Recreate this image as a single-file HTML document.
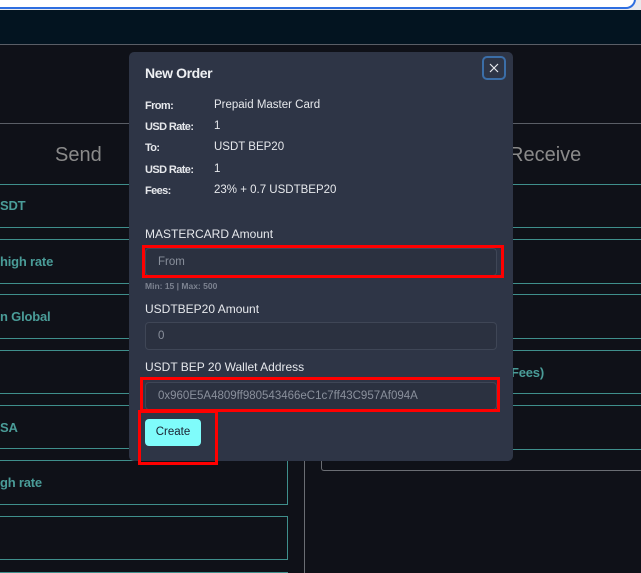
<!DOCTYPE html>
<html><head><meta charset="utf-8"><style>
*{box-sizing:border-box;margin:0;padding:0}
html,body{width:641px;height:573px;overflow:hidden}
body{background:#0f1118;font-family:"Liberation Sans",sans-serif;position:relative}
.a{position:absolute}
.row{position:absolute;border:1px solid #3f8f8c;border-left:none}
.tl{position:absolute;color:#4a9c98;font-size:13px;font-weight:bold;letter-spacing:-0.2px}
.hl{position:absolute;height:1px;background:#3f8f8c}
.lab{position:absolute;left:145px;color:#e6e8ec;font-size:11px;font-weight:bold;letter-spacing:-0.6px}
.val{position:absolute;left:214px;color:#e6e8ec;font-size:11.5px}
.fl{position:absolute;left:145px;color:#e6e8ec;font-size:12px}
.in{position:absolute;left:145px;width:352px;height:28px;background:#2b3140;border:1px solid #3f4656;border-radius:4px;color:#8a909c;font-size:11.5px;padding:7px 12px}
.red{position:absolute;border:3px solid #f00}
</style></head><body>
<div class="a" style="left:0;top:0;width:641px;height:10px;background:#e9e9ec"></div>
<div class="a" style="left:-10px;top:-10px;width:646px;height:19px;background:#fff;border:2px solid #2d6ee0;border-top:none;border-left:none;border-radius:0 0 10px 0"></div>
<div class="a" style="left:0;top:10px;width:641px;height:34px;background:#031420"></div>
<div class="a" style="left:0;top:44px;width:641px;height:1px;background:#5a5e66"></div>
<div class="a" style="left:0;top:123px;width:641px;height:1px;background:#5a5e66"></div>
<div class="a" style="left:55px;top:144px;color:#8a8a8a;font-size:20px">Send</div>
<div class="a" style="left:509px;top:144px;color:#8a8a8a;font-size:20px">Receive</div>
<div class="row" style="left:0;top:184px;width:288px;height:44px"></div>
<div class="row" style="left:0;top:239px;width:288px;height:45px"></div>
<div class="row" style="left:0;top:294px;width:288px;height:45px"></div>
<div class="row" style="left:0;top:350px;width:288px;height:44px"></div>
<div class="row" style="left:0;top:405px;width:288px;height:44px"></div>
<div class="row" style="left:0;top:460px;width:288px;height:45px"></div>
<div class="row" style="left:0;top:516px;width:288px;height:44px"></div>
<div class="row" style="left:0;top:572px;width:288px;height:10px"></div>
<div class="tl" style="left:0;top:198px">SDT</div>
<div class="tl" style="left:0;top:254px">high rate</div>
<div class="tl" style="left:0;top:309px">n Global</div>
<div class="tl" style="left:0;top:420px">SA</div>
<div class="tl" style="left:0;top:475px">gh rate</div>
<div class="hl" style="left:305px;top:184px;width:336px"></div>
<div class="hl" style="left:305px;top:227px;width:336px"></div>
<div class="hl" style="left:305px;top:239px;width:336px"></div>
<div class="hl" style="left:305px;top:283px;width:336px"></div>
<div class="hl" style="left:305px;top:294px;width:336px"></div>
<div class="hl" style="left:305px;top:338px;width:336px"></div>
<div class="hl" style="left:305px;top:350px;width:336px"></div>
<div class="hl" style="left:305px;top:393px;width:336px"></div>
<div class="hl" style="left:305px;top:405px;width:336px"></div>
<div class="hl" style="left:305px;top:449px;width:336px"></div>
<div class="tl" style="left:511px;top:365px">Fees)</div>
<div class="a" style="left:321px;top:440px;width:330px;height:31px;border:1px solid #6a6d73;border-top:none;border-right:none;border-radius:0 0 0 3px"></div>
<div class="a" style="left:304px;top:440px;width:1px;height:140px;background:#6a6d73"></div>
<div class="a" style="left:129px;top:52px;width:384px;height:409px;background:#2e3546;border-radius:5px"></div>
<div class="a" style="left:145px;top:65px;color:#eef0f3;font-size:14px;font-weight:bold;letter-spacing:-0.4px">New Order</div>
<div class="a" style="left:482px;top:56px;width:24px;height:24px;border:2px solid #3b6ea8;border-radius:5px"><svg width="20" height="20" style="position:absolute;left:0;top:0"><path d="M6 6L14 14M14 6L6 14" stroke="#e6e8ec" stroke-width="1.2"/></svg></div>
<div class="lab" style="top:100px">From:</div><div class="val" style="top:99px">Prepaid Master Card</div>
<div class="lab" style="top:121px">USD Rate:</div><div class="val" style="top:120px">1</div>
<div class="lab" style="top:142px">To:</div><div class="val" style="top:141px">USDT BEP20</div>
<div class="lab" style="top:164px">USD Rate:</div><div class="val" style="top:163px">1</div>
<div class="lab" style="top:185px">Fees:</div><div class="val" style="top:184px">23% + 0.7 USDTBEP20</div>
<div class="fl" style="top:227px">MASTERCARD Amount</div>
<div class="in" style="top:248px">From</div>
<div class="a" style="left:145px;top:281px;color:#7c8290;font-size:8.5px;font-weight:bold">Min: 15 | Max: 500</div>
<div class="fl" style="top:302px">USDTBEP20 Amount</div>
<div class="in" style="top:322px">0</div>
<div class="fl" style="top:360px">USDT BEP 20 Wallet Address</div>
<div class="in" style="top:382px">0x960E5A4809ff980543466eC1c7ff43C957Af094A</div>
<div class="a" style="left:145px;top:419px;width:56px;height:27px;background:#7ffcfb;border-radius:4px;color:#1a2030;font-size:11.5px;text-align:center;line-height:27px">Create</div>
<div class="red" style="left:142px;top:245px;width:362px;height:33px"></div>
<div class="red" style="left:140px;top:377px;width:360px;height:35px"></div>
<div class="red" style="left:138px;top:410px;width:80px;height:55px"></div>
</body></html>
